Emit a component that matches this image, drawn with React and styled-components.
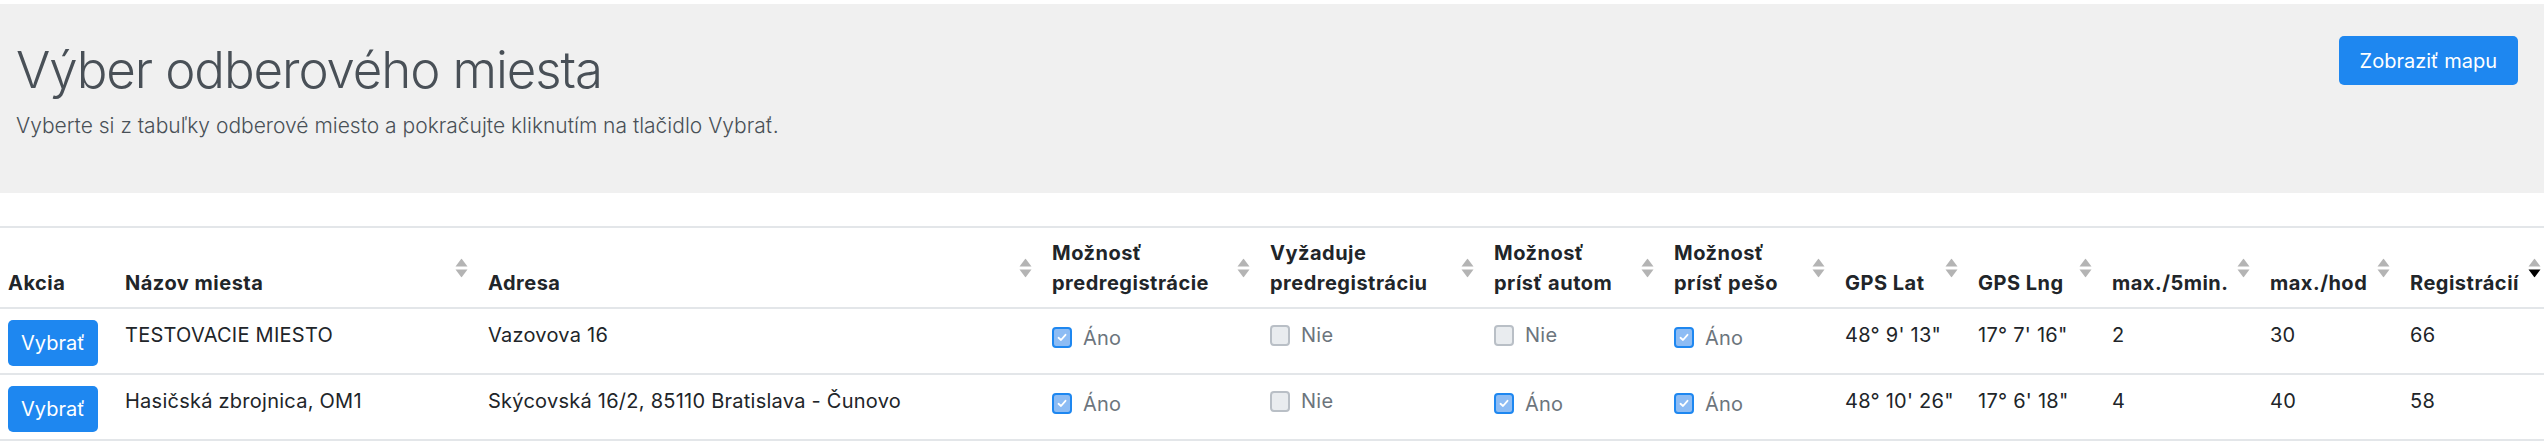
import React from "react";
import styled, { createGlobalStyle } from "styled-components";

const GlobalStyle = createGlobalStyle`
  body {
    margin: 0;
    background: #fff;
    color: #212529;
    font-family: Inter, Roboto, "Liberation Sans", sans-serif;
  }
`;

const columns = [
  { lines: ["Akcia"], width: 117 },
  { lines: ["Názov miesta"], width: 363, sort: true },
  { lines: ["Adresa"], width: 564, sort: true },
  { lines: ["Možnosť", "predregistrácie"], width: 218, sort: true },
  { lines: ["Vyžaduje", "predregistráciu"], width: 224, sort: true },
  { lines: ["Možnosť", "prísť autom"], width: 180, sort: true },
  { lines: ["Možnosť", "prísť pešo"], width: 171, sort: true },
  { lines: ["GPS Lat"], width: 133, sort: true },
  { lines: ["GPS Lng"], width: 134, sort: true },
  { lines: ["max./5min."], width: 158, sort: true },
  { lines: ["max./hod"], width: 140, sort: true },
  { lines: ["Registrácií"], width: 151, sort: true, active: true },
];

const places = [
  {
    name: "TESTOVACIE MIESTO",
    address: "Vazovova 16",
    flags: [true, false, false, true],
    lat: `48° 9' 13"`,
    lng: `17° 7' 16"`,
    per5: 2,
    perHour: 30,
    count: 66,
  },
  {
    name: "Hasičská zbrojnica, OM1",
    address: "Skýcovská 16/2, 85110 Bratislava - Čunovo",
    flags: [true, false, true, true],
    lat: `48° 10' 26"`,
    lng: `17° 6' 18"`,
    per5: 4,
    perHour: 40,
    count: 58,
  },
];

function SortIcon({ active }) {
  return (
    <SortMark width="13" height="19" viewBox="0 0 13 19">
      <path d="M6.5 0 L12.5 8 L0.5 8 Z" fill="#b4b4b4" />
      <path d="M0.5 11 L12.5 11 L6.5 19 Z" fill={active ? "#000" : "#b4b4b4"} />
    </SortMark>
  );
}

function Check({ checked }) {
  return (
    <CheckLabel>
      <Box $checked={checked}>
        {checked && (
          <svg width="10" height="9" viewBox="0 0 10 9">
            <path d="M1.5 4.8 L4 7 L8.5 1.8" stroke="#fff" strokeWidth="1.8" fill="none" strokeLinecap="round" strokeLinejoin="round" />
          </svg>
        )}
      </Box>
      {checked ? "Áno" : "Nie"}
    </CheckLabel>
  );
}

function App() {
  return (
    <Page>
      <GlobalStyle />
      <Jumbotron>
        <Intro>
          <Title>Výber odberového miesta</Title>
          <Lead>Vyberte si z tabuľky odberové miesto a pokračujte kliknutím na tlačidlo Vybrať.</Lead>
        </Intro>
        <Button $large>Zobraziť mapu</Button>
      </Jumbotron>

      <TableWrap>
        <Table>
          <colgroup>
            {columns.map((c, i) => (
              <col key={i} style={{ width: c.width }} />
            ))}
          </colgroup>
          <thead>
            <tr>
              {columns.map((c, i) => (
                <Th key={i}>
                  {c.lines.map((l, j) => (
                    <div key={j}>{l}</div>
                  ))}
                  {c.sort && <SortIcon active={c.active} />}
                </Th>
              ))}
            </tr>
          </thead>
          <tbody>
            {places.map((p, i) => (
              <tr key={i}>
                <Td>
                  <Button>Vybrať</Button>
                </Td>
                <Td>{p.name}</Td>
                <Td>{p.address}</Td>
                {p.flags.map((f, j) => (
                  <Td key={j}>
                    <Check checked={f} />
                  </Td>
                ))}
                <Td>{p.lat}</Td>
                <Td>{p.lng}</Td>
                <Td>{p.per5}</Td>
                <Td>{p.perHour}</Td>
                <Td>{p.count}</Td>
              </tr>
            ))}
          </tbody>
        </Table>
      </TableWrap>
    </Page>
  );
}

const Page = styled.div`
  padding-top: 4px;
  width: 2544px;
  overflow: hidden;
`;

const Jumbotron = styled.header`
  display: flex;
  justify-content: space-between;
  align-items: flex-start;
  box-sizing: border-box;
  height: 189px;
  padding: 32px 26px 0 16px;
  background: #f0f0f0;
`;

const Intro = styled.div`
  padding-top: 3px;
`;

const Title = styled.h1`
  margin: 0;
  font-size: 51px;
  font-weight: 300;
  line-height: 62px;
  letter-spacing: -1.1px;
  color: #495057;
`;

const Lead = styled.p`
  margin: 10px 0 0;
  font-size: 21px;
  font-weight: 300;
  line-height: 30px;
  color: #495057;
`;

const Button = styled.button`
  height: ${(p) => (p.$large ? "49px" : "46px")};
  padding: 0 ${(p) => (p.$large ? "21px" : "13px")};
  border: none;
  border-radius: 5px;
  background: #1e87f0;
  color: #fff;
  font-family: inherit;
  font-size: 20px;
  line-height: 30px;
  cursor: pointer;
`;

const TableWrap = styled.div`
  margin-top: 33px;
`;

const Table = styled.table`
  table-layout: fixed;
  width: 2553px;
  border-collapse: separate;
  border-spacing: 0;
  font-size: 20px;
  line-height: 30px;
`;

const Th = styled.th`
  position: relative;
  padding: 10px 8px 9px;
  text-align: left;
  vertical-align: bottom;
  font-weight: 700;
  letter-spacing: 0.5px;
  border-top: 2px solid #e3e6e9;
  border-bottom: 2px solid #e3e6e9;
  white-space: nowrap;
`;

const SortMark = styled.svg`
  position: absolute;
  right: 12px;
  top: 50%;
  transform: translateY(-50%);
`;

const Td = styled.td`
  padding: 11px 8px 7px;
  vertical-align: top;
  letter-spacing: 0.25px;
  border-bottom: 2px solid #e3e6e9;
  white-space: nowrap;
`;

const CheckLabel = styled.span`
  display: inline-flex;
  align-items: center;
  gap: 11px;
  color: #6c757d;
`;

const Box = styled.span`
  display: inline-flex;
  align-items: center;
  justify-content: center;
  box-sizing: border-box;
  width: 20px;
  height: 21px;
  border-radius: 4px;
  border: 2px solid ${(p) => (p.$checked ? "#1e87f0" : "#b9bfc6")};
  background: ${(p) => (p.$checked ? "#8dbcf4" : "#e9ecef")};
`;

export default App;
